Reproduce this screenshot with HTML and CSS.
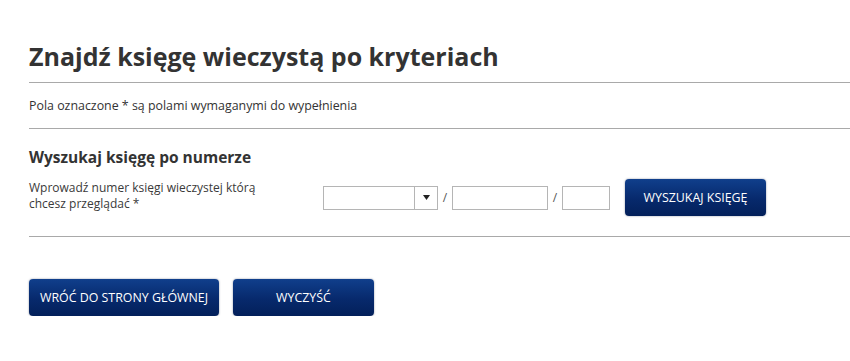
FILE: index.html
```html
<!DOCTYPE html>
<html lang="pl">
<head>
  <meta charset="UTF-8">
  <meta name="viewport" content="width=device-width, initial-scale=1.0">
  <title>Znajdź księgę wieczystą po kryteriach</title>
  <link rel="stylesheet" href="styles.css">
</head>
<body>
  <div class="page">
    <h1>Znajdź księgę wieczystą po kryteriach</h1>
    <p class="info">Pola oznaczone * są polami wymaganymi do wypełnienia</p>

    <div class="section">
      <h2>Wyszukaj księgę po numerze</h2>
      <div class="row">
        <label class="label">Wprowadź numer księgi wieczystej którą chcesz przeglądać *</label>
        <div class="fields">
          <div class="select">
            <span class="select-value"></span>
            <span class="select-arrow">
              <svg width="7" height="5" viewBox="0 0 7 5"><path d="M0 0H7L3.5 5Z" fill="#222"/></svg>
            </span>
          </div>
          <span class="sep">/</span>
          <input class="input input-mid" type="text">
          <span class="sep">/</span>
          <input class="input input-short" type="text">
          <button class="btn btn-search">WYSZUKAJ KSIĘGĘ</button>
        </div>
      </div>
    </div>

    <div class="actions">
      <button class="btn btn-back">WRÓĆ DO STRONY GŁÓWNEJ</button>
      <button class="btn btn-clear">WYCZYŚĆ</button>
    </div>
  </div>
</body>
</html>
```

FILE: styles.css
```css
body {
  margin: 0;
  padding: 0;
  background: #fff;
  font-family: "Open Sans", "Noto Sans", sans-serif;
  color: #333;
}
.page {
  padding: 40px 0 0 29px;
}
h1 {
  font-size: 25px;
  font-weight: 700;
  color: #333;
  margin: 0;
  line-height: 32px;
  padding-bottom: 10px;
  border-bottom: 1px solid #a9a9a9;
}
.info {
  font-size: 12.4px;
  margin: 0;
  padding: 15px 0 15px;
  line-height: 15px;
  border-bottom: 1px solid #a9a9a9;
}
.section {
  padding: 18px 0 20px;
  border-bottom: 1px solid #a9a9a9;
}
h2 {
  font-size: 15.5px;
  font-weight: 700;
  margin: 0 0 10px;
  line-height: 20px;
}
.row {
  display: flex;
  align-items: flex-start;
}
.label {
  width: 294px;
  font-size: 12px;
  line-height: 16px;
  padding-top: 3px;
  padding-right: 40px;
  box-sizing: border-box;
  color: #3a3a3a;
}
.fields {
  display: flex;
  align-items: center;
  margin-top: 2px;
}
.select {
  display: flex;
  width: 115px;
  height: 24px;
  border: 1px solid #b5b5b5;
  box-sizing: border-box;
}
.select-value {
  flex: 1;
}
.select-arrow {
  width: 22px;
  border-left: 1px solid #b5b5b5;
  display: flex;
  align-items: center;
  justify-content: center;
}
.sep {
  font-size: 12px;
  color: #555;
  width: 14px;
  text-align: center;
}
.input {
  height: 24px;
  border: 1px solid #b5b5b5;
  box-sizing: border-box;
  padding: 0;
  margin: 0;
}
.input-mid {
  width: 96px;
}
.input-short {
  width: 48px;
}
.btn {
  font-family: "Open Sans", "Noto Sans", sans-serif;
  font-size: 12.4px;
  color: #fff;
  height: 37px;
  border: none;
  border-radius: 4px;
  background: linear-gradient(#103f8c, #07296c 55%, #03205a);
  box-shadow: 0 0 2px rgba(40, 50, 80, 0.55);
  cursor: pointer;
  padding: 0;
}
.btn-search {
  width: 141px;
  margin-left: 15px;
}
.actions {
  display: flex;
  gap: 14px;
  padding-top: 42px;
}
.btn-back {
  width: 190px;
}
.btn-clear {
  width: 141px;
}
```
